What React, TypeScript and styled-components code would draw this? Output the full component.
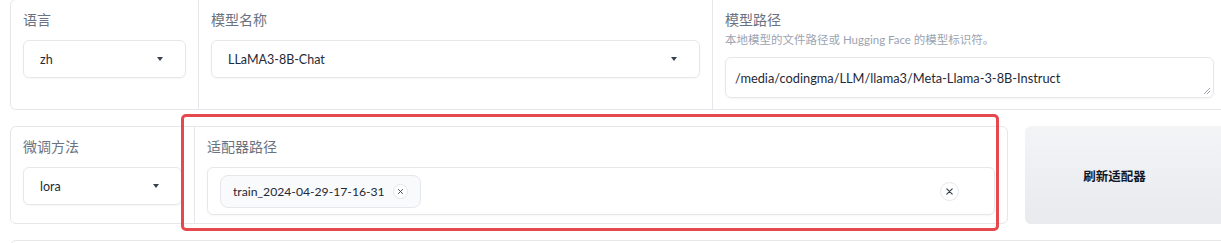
import React from 'react';
import styled, { createGlobalStyle } from 'styled-components';

const GlobalStyle = createGlobalStyle`
  html, body {
    margin: 0;
    padding: 0;
    background: #ffffff;
  }
  body {
    font-family: 'Source Sans Pro', Lato, 'Noto Sans CJK SC', sans-serif;
    color: #1f2937;
    overflow: hidden;
  }
`;

const Page = styled.div`
  width: 1221px;
  height: 243px;
  overflow: hidden;
`;

const Inner = styled.div`
  width: 1232px;
  padding-left: 10px;
  display: flex;
  flex-direction: column;
  gap: 16px;
`;

const Card = styled.div<{ $height: number; $width?: number }>`
  position: relative;
  box-sizing: border-box;
  display: flex;
  flex: none;
  height: ${({ $height }) => $height}px;
  ${({ $width }) => ($width ? `width: ${$width}px;` : '')}
  border: 1px solid #e5e7eb;
  border-radius: 6px;
  background: #ffffff;
`;

const Column = styled.div<{ $width?: number }>`
  box-sizing: border-box;
  display: flex;
  flex-direction: column;
  padding: 12px 12px 0;
  ${({ $width }) => ($width ? `width: ${$width}px; flex: none;` : 'flex: 1; min-width: 0;')}
  & + & {
    border-left: 1px solid #e5e7eb;
  }
`;

const Label = styled.div`
  font-size: 14px;
  line-height: 16px;
  color: #6b7280;
  margin-bottom: 12px;
`;

const Info = styled.div`
  font-size: 11.5px;
  line-height: 14px;
  color: #9ca3af;
  margin-top: -7px;
  margin-bottom: 10px;
`;

const Select = styled.div`
  box-sizing: border-box;
  height: 38px;
  display: flex;
  align-items: center;
  justify-content: space-between;
  padding: 0 22px 0 16px;
  border: 1px solid #e5e7eb;
  border-radius: 6px;
  box-shadow: 0 1px 2px rgba(0, 0, 0, 0.04);
  font-size: 12.5px;
  color: #1f2937;
`;

const Caret = styled.span`
  width: 0;
  height: 0;
  border-left: 3.5px solid transparent;
  border-right: 3.5px solid transparent;
  border-top: 4px solid #374151;
`;

const TextArea = styled.div`
  position: relative;
  box-sizing: border-box;
  width: 489px;
  height: 41px;
  display: flex;
  align-items: center;
  padding: 0 9px;
  border: 1px solid #e5e7eb;
  border-radius: 6px;
  box-shadow: 0 1px 2px rgba(0, 0, 0, 0.04);
  font-size: 12.8px;
  color: #1f2937;
  white-space: nowrap;
`;

const Grip = styled.svg`
  position: absolute;
  right: 2px;
  bottom: 2px;
`;

const MultiBox = styled.div`
  box-sizing: border-box;
  height: 48px;
  display: flex;
  align-items: center;
  padding: 0 12px;
  border: 1px solid #e5e7eb;
  border-radius: 6px;
  box-shadow: 0 1px 2px rgba(0, 0, 0, 0.04);
`;

const Chip = styled.div`
  box-sizing: border-box;
  height: 33px;
  display: flex;
  align-items: center;
  gap: 8px;
  padding: 0 12px;
  border: 1px solid #e5e7eb;
  border-radius: 8px;
  background: #f9fafb;
  font-size: 12.2px;
  color: #1f2937;
`;

const ClearDot = styled.span<{ $size: number; $inset?: number }>`
  box-sizing: border-box;
  width: ${({ $size }) => $size}px;
  height: ${({ $size }) => $size}px;
  margin-right: ${({ $inset }) => $inset ?? 0}px;
  display: inline-flex;
  align-items: center;
  justify-content: center;
  border: 1px solid #e5e7eb;
  border-radius: 50%;
  background: #ffffff;
`;

const Spacer = styled.div`
  flex: 1;
`;

const RefreshButton = styled.div`
  box-sizing: border-box;
  flex: 1;
  height: 98px;
  display: flex;
  align-items: center;
  justify-content: center;
  padding-right: 38px;
  border-radius: 6px;
  background: linear-gradient(180deg, #f3f4f6 0%, #e9eaee 100%);
  font-size: 12.5px;
  font-weight: 700;
  color: #111827;
`;

const Row = styled.div`
  display: flex;
  gap: 17px;
`;

const Highlight = styled.div`
  position: absolute;
  left: 170px;
  top: -13px;
  width: 818px;
  height: 117px;
  box-sizing: border-box;
  border: 3.5px solid #e5484d;
  border-radius: 5px;
  pointer-events: none;
`;

const Cross = ({ size }: { size: number }) => (
  <svg width={size} height={size} viewBox="0 0 10 10">
    <path d="M2 2 L8 8 M8 2 L2 8" stroke="#374151" strokeWidth="1.3" strokeLinecap="round" />
  </svg>
);

export default function App() {
  return (
    <Page>
      <GlobalStyle />
      <Inner>
        <Card $height={111} style={{ marginTop: -1 }}>
          <Column $width={187}>
            <Label>语言</Label>
            <Select>
              zh
              <Caret />
            </Select>
          </Column>
          <Column $width={514}>
            <Label>模型名称</Label>
            <Select>
              LLaMA3-8B-Chat
              <Caret />
            </Select>
          </Column>
          <Column>
            <Label>模型路径</Label>
            <Info>本地模型的文件路径或 Hugging Face 的模型标识符。</Info>
            <TextArea>
              /media/codingma/LLM/llama3/Meta-Llama-3-8B-Instruct
              <Grip width="8" height="8" viewBox="0 0 8 8">
                <path d="M7 1 L1 7 M7 4 L4 7" stroke="#9ca3af" strokeWidth="1" />
              </Grip>
            </TextArea>
          </Column>
        </Card>
        <Row>
          <Card $height={98} $width={998}>
            <Column $width={183}>
              <Label>微调方法</Label>
              <Select>
                lora
                <Caret />
              </Select>
            </Column>
            <Column>
              <Label>适配器路径</Label>
              <MultiBox>
                <Chip>
                  train_2024-04-29-17-16-31
                  <ClearDot $size={15}>
                    <Cross size={7} />
                  </ClearDot>
                </Chip>
                <Spacer />
                <ClearDot $size={19} $inset={23}>
                  <Cross size={9} />
                </ClearDot>
              </MultiBox>
            </Column>
            <Highlight />
          </Card>
          <RefreshButton>刷新适配器</RefreshButton>
        </Row>
        <Card $height={60} />
      </Inner>
    </Page>
  );
}
